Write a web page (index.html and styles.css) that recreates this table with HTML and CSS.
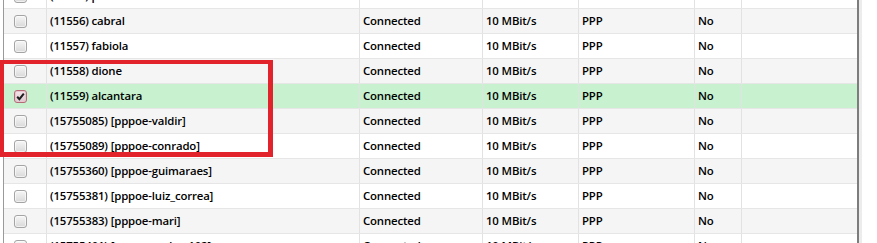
FILE: index.html
```html
<!DOCTYPE html>
<html>
<head>
<meta charset="utf-8">
<link rel="stylesheet" href="styles.css">
</head>
<body>
<div class="viewport">
  <div class="grid">
    <div class="row white">
      <div class="cell chk"><span class="box"></span></div>
      <div class="cell">(11555) pedro</div>
      <div class="cell">Connected</div>
      <div class="cell">10 MBit/s</div>
      <div class="cell">PPP</div>
      <div class="cell">No</div>
      <div class="cell last"></div>
    </div>
    <div class="row gray">
      <div class="cell chk"><span class="box"></span></div>
      <div class="cell">(11556) cabral</div>
      <div class="cell">Connected</div>
      <div class="cell">10 MBit/s</div>
      <div class="cell">PPP</div>
      <div class="cell">No</div>
      <div class="cell last"></div>
    </div>
    <div class="row white">
      <div class="cell chk"><span class="box"></span></div>
      <div class="cell">(11557) fabiola</div>
      <div class="cell">Connected</div>
      <div class="cell">10 MBit/s</div>
      <div class="cell">PPP</div>
      <div class="cell">No</div>
      <div class="cell last"></div>
    </div>
    <div class="row gray">
      <div class="cell chk"><span class="box"></span></div>
      <div class="cell">(11558) dione</div>
      <div class="cell">Connected</div>
      <div class="cell">10 MBit/s</div>
      <div class="cell">PPP</div>
      <div class="cell">No</div>
      <div class="cell last"></div>
    </div>
    <div class="row selected">
      <div class="cell chk"><span class="box checked"><svg viewBox="0 0 13 13" width="13" height="13"><path d="M3.2 6.8 L5.4 9.2 L9.8 3.6" fill="none" stroke="#1e1e1e" stroke-width="2"/></svg></span></div>
      <div class="cell">(11559) alcantara</div>
      <div class="cell">Connected</div>
      <div class="cell">10 MBit/s</div>
      <div class="cell">PPP</div>
      <div class="cell">No</div>
      <div class="cell last"></div>
    </div>
    <div class="row gray">
      <div class="cell chk"><span class="box"></span></div>
      <div class="cell">(15755085) [pppoe-valdir]</div>
      <div class="cell">Connected</div>
      <div class="cell">10 MBit/s</div>
      <div class="cell">PPP</div>
      <div class="cell">No</div>
      <div class="cell last"></div>
    </div>
    <div class="row white">
      <div class="cell chk"><span class="box"></span></div>
      <div class="cell">(15755089) [pppoe-conrado]</div>
      <div class="cell">Connected</div>
      <div class="cell">10 MBit/s</div>
      <div class="cell">PPP</div>
      <div class="cell">No</div>
      <div class="cell last"></div>
    </div>
    <div class="row gray">
      <div class="cell chk"><span class="box"></span></div>
      <div class="cell">(15755360) [pppoe-guimaraes]</div>
      <div class="cell">Connected</div>
      <div class="cell">10 MBit/s</div>
      <div class="cell">PPP</div>
      <div class="cell">No</div>
      <div class="cell last"></div>
    </div>
    <div class="row white">
      <div class="cell chk"><span class="box"></span></div>
      <div class="cell">(15755381) [pppoe-luiz_correa]</div>
      <div class="cell">Connected</div>
      <div class="cell">10 MBit/s</div>
      <div class="cell">PPP</div>
      <div class="cell">No</div>
      <div class="cell last"></div>
    </div>
    <div class="row gray">
      <div class="cell chk"><span class="box"></span></div>
      <div class="cell">(15755383) [pppoe-mari]</div>
      <div class="cell">Connected</div>
      <div class="cell">10 MBit/s</div>
      <div class="cell">PPP</div>
      <div class="cell">No</div>
      <div class="cell last"></div>
    </div>
    <div class="row white">
      <div class="cell chk"><span class="box"></span></div>
      <div class="cell">(15755401) [pppoe-pedro_102]</div>
      <div class="cell">Connected</div>
      <div class="cell">10 MBit/s</div>
      <div class="cell">PPP</div>
      <div class="cell">No</div>
      <div class="cell last"></div>
    </div>
  </div>
  <div class="scrollbar"></div>
  <div class="highlight"></div>
</div>
</body>
</html>
```
FILE: styles.css
```css
* { box-sizing: border-box; }
html, body { margin: 0; padding: 0; background: #fff; }
.viewport {
  position: relative;
  width: 877px;
  height: 243px;
  overflow: hidden;
  display: flex;
  align-items: flex-start;
  padding-left: 3px;
  font-family: "Open Sans", "Noto Sans", sans-serif;
  font-weight: 600;
  font-size: 11.4px;
  letter-spacing: -0.15px;
  color: #000;
}
.grid {
  width: 854px;
  margin-top: -16px;
  border-left: 1px solid #9a9a9a;
  flex: none;
}
.row {
  display: grid;
  grid-template-columns: 43px 313px 123px 96px 116px 47px 115px;
  height: 25px;
  border-bottom: 1px solid #e6e6e6;
}
.row.white { background: #fff; }
.row.gray { background: #f5f5f5; }
.row.selected { background: #c7f1cf; }
.cell {
  border-right: 1px solid #e2e2e2;
  padding-left: 3px;
  padding-bottom: 1px;
  display: flex;
  align-items: center;
  white-space: nowrap;
  overflow: hidden;
}
.cell.last { border-right: none; }
.cell.chk { justify-content: flex-start; padding-left: 10px; padding-bottom: 0; }
.box {
  display: block;
  width: 13px;
  height: 13px;
  border: 1px solid #a4a4a4;
  border-radius: 3px;
  background: linear-gradient(#f6f6f6, #d9d9d9);
  box-shadow: inset 0 0 0 1px rgba(255,255,255,0.6);
  position: relative;
}
.box svg { position: absolute; left: -1px; top: -1px; }
.box.checked {
  border-color: #b56a78;
  background: linear-gradient(#f3e6ea, #dcc9cf);
  box-shadow: inset 0 0 0 1px #e8c6cf;
}
.scrollbar {
  flex: none;
  width: 20px;
  height: 243px;
  border-left: 2px solid #7d7d7d;
  background: linear-gradient(to right, #ececec 0, #ececec 3px, #fff 3px);
}
.highlight {
  position: absolute;
  left: 0;
  top: 60px;
  width: 273px;
  height: 97px;
  border-style: solid;
  border-color: #e2232b;
  border-width: 4px 5px 5px 4px;
  pointer-events: none;
}
```
